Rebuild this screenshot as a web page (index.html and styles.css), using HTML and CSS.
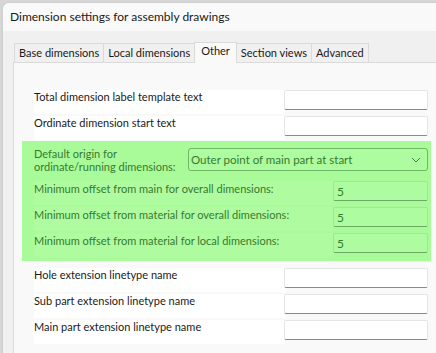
FILE: index.html
```html
<!DOCTYPE html>
<html lang="en">
<head>
    <meta charset="UTF-8">
    <title>Dimension settings for assembly drawings</title>
    <link rel="stylesheet" href="styles.css">
</head>
<body>
    <div class="window">
        <div class="titlebar">Dimension settings for assembly drawings</div>

        <div class="body">
            <div class="tabs">
                <div class="tab">Base dimensions</div>
                <div class="tab">Local dimensions</div>
                <div class="tab active">Other</div>
                <div class="tab">Section views</div>
                <div class="tab">Advanced</div>
            </div>

            <div class="panel">
                <div class="row">
                    <div class="label">Total dimension label template text</div>
                    <input class="text" type="text">
                </div>
                <div class="row">
                    <div class="label">Ordinate dimension start text</div>
                    <input class="text" type="text">
                </div>

                <div class="highlight">
                    <div class="origin-row">
                        <div class="origin-label">Default origin for<br>ordinate/running dimensions:</div>
                        <div class="select">
                            <span>Outer point of main part at start</span>
                            <svg class="chevron" viewBox="0 0 10 6" width="10" height="6">
                                <path d="M1 1 L5 5 L9 1" fill="none" stroke="#4f7f49" stroke-width="1"/>
                            </svg>
                        </div>
                    </div>
                    <div class="row small">
                        <div class="label">Minimum offset from main for overall dimensions:</div>
                        <div class="num">5</div>
                    </div>
                    <div class="row small">
                        <div class="label">Minimum offset from material for overall dimensions:</div>
                        <div class="num">5</div>
                    </div>
                    <div class="row small">
                        <div class="label">Minimum offset from material for local dimensions:</div>
                        <div class="num">5</div>
                    </div>
                </div>

                <div class="lower">
                    <div class="row">
                        <div class="label">Hole extension linetype name</div>
                        <input class="text" type="text">
                    </div>
                    <div class="row">
                        <div class="label">Sub part extension linetype name</div>
                        <input class="text" type="text">
                    </div>
                    <div class="row">
                        <div class="label">Main part extension linetype name</div>
                        <input class="text" type="text">
                    </div>
                </div>
            </div>
        </div>
    </div>
</body>
</html>
```

FILE: styles.css
```css
body {
    margin: 0;
    background-color: #d6d6d6;
    font-family: Lato, "Noto Sans", sans-serif;
    font-size: 11px;
    color: #1a1a1a;
    overflow: hidden;
}

.window {
    margin: 2px 0 0 2px;
    height: 360px;
    background-color: #f0f0f0;
    border-top: 1px solid #cfcfcf;
    border-left: 1px solid #cfcfcf;
    border-top-left-radius: 7px;
    overflow: hidden;
}

.titlebar {
    height: 28px;
    line-height: 28px;
    padding-left: 7px;
    background-color: #f9f9f9;
    font-size: 12px;
    color: #1a1a1a;
}

.body {
    padding: 11px 0 0 10px;
}

.tabs {
    display: flex;
    align-items: flex-end;
    padding-left: 1px;
    height: 20px;
}

.tab {
    height: 18px;
    line-height: 18px;
    padding: 0 4px;
    background-color: #f0f0f0;
    border: 1px solid #dadada;
    border-bottom: none;
    margin-right: -1px;
    color: #1a1a1a;
}

.tab.active {
    height: 20px;
    line-height: 16px;
    padding: 0 6px;
    background-color: #f9f9f9;
    position: relative;
    z-index: 1;
    margin-bottom: -1px;
}

.panel {
    background-color: #f9f9f9;
    border-top: 1px solid #dadada;
    border-left: 1px solid #dadada;
    height: 300px;
    padding: 27px 0 0 20px;
}

.row {
    display: flex;
    align-items: flex-start;
    width: 394px;
    height: 24px;
    margin-bottom: 2px;
}

.label {
    flex: 1;
    height: 24px;
    background-color: #ffffff;
    line-height: 14px;
    white-space: nowrap;
}

.text {
    box-sizing: border-box;
    width: 144px;
    height: 20px;
    margin: 0 0 0 -1px;
    padding: 0;
    background-color: #ffffff;
    border: 1px solid #e5e5e5;
    border-bottom: 1px solid #8a8a8a;
    border-radius: 2px;
}

.highlight {
    margin: -1px 0 0 -12px;
    width: 409px;
    height: 120px;
    padding: 6px 0 0 12px;
    box-sizing: border-box;
    background-color: #a9fb9a;
    color: #367a30;
}

.origin-row {
    display: flex;
    width: 394px;
    height: 34px;
}

.origin-label {
    width: 154px;
    line-height: 13px;
    white-space: nowrap;
}

.select {
    box-sizing: border-box;
    flex: 1;
    height: 23px;
    margin-top: 1px;
    display: flex;
    align-items: center;
    justify-content: space-between;
    padding: 0 6px 0 2px;
    background-color: #adfc9f;
    border: 1px solid #6fb765;
    border-radius: 3px;
    font-size: 11.5px;
}

.row.small .label {
    background-color: #aefc9f;
    padding-top: 1px;
    height: 23px;
}

.num {
    box-sizing: border-box;
    width: 95px;
    height: 20px;
    line-height: 20px;
    padding-left: 3px;
    background-color: #adfc9f;
    border: 1px solid #9fe891;
    border-bottom: 1px solid #6fa866;
    border-radius: 2px;
    margin-left: -1px;
    font-size: 12px;
}

.lower {
    margin-top: 7px;
}
```
